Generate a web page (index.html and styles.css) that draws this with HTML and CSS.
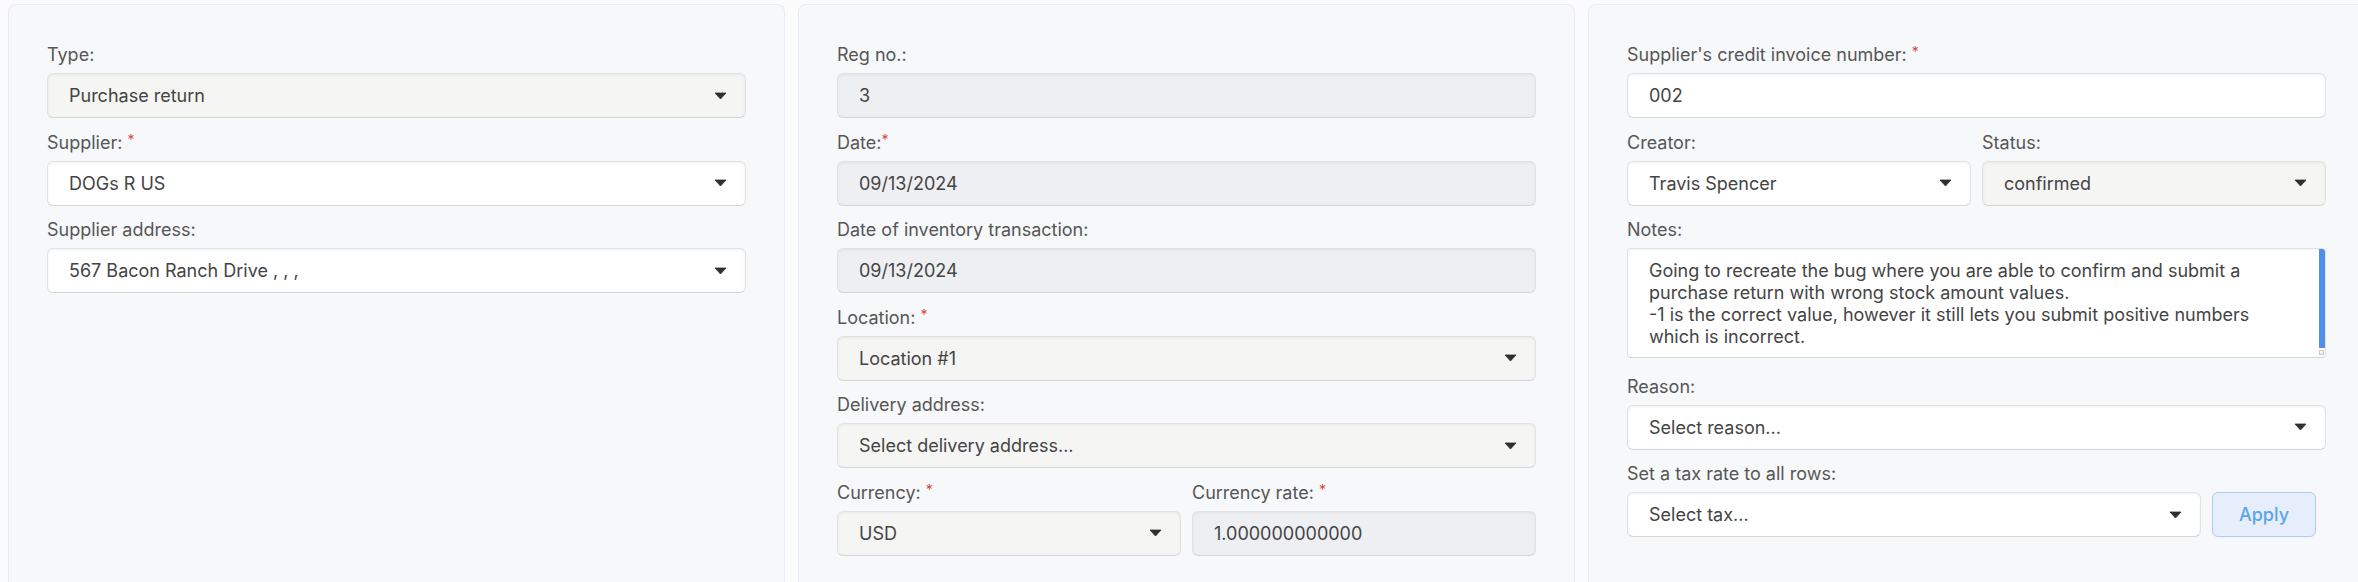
FILE: index.html
```html
<!DOCTYPE html>
<html lang="en">
<head>
<meta charset="utf-8">
<title>Purchase return</title>
<link rel="stylesheet" href="styles.css">
</head>
<body>
<div class="cards">
  <section class="card">
    <div class="field">
      <label class="lbl">Type:</label>
      <div class="ctrl gray"><span>Purchase return</span><svg class="caret" viewBox="0 0 13 8"><path d="M1 1H12L6.5 7Z"/></svg></div>
    </div>
    <div class="field">
      <label class="lbl">Supplier: <span class="req">*</span></label>
      <div class="ctrl"><span>DOGs R US</span><svg class="caret" viewBox="0 0 13 8"><path d="M1 1H12L6.5 7Z"/></svg></div>
    </div>
    <div class="field">
      <label class="lbl">Supplier address:</label>
      <div class="ctrl"><span>567 Bacon Ranch Drive , , ,</span><svg class="caret" viewBox="0 0 13 8"><path d="M1 1H12L6.5 7Z"/></svg></div>
    </div>
  </section>

  <section class="card">
    <div class="field">
      <label class="lbl">Reg no.:</label>
      <div class="ctrl ro"><span>3</span></div>
    </div>
    <div class="field">
      <label class="lbl">Date:<span class="req">*</span></label>
      <div class="ctrl ro"><span>09/13/2024</span></div>
    </div>
    <div class="field">
      <label class="lbl">Date of inventory transaction:</label>
      <div class="ctrl ro"><span>09/13/2024</span></div>
    </div>
    <div class="field">
      <label class="lbl">Location: <span class="req">*</span></label>
      <div class="ctrl gray"><span>Location #1</span><svg class="caret" viewBox="0 0 13 8"><path d="M1 1H12L6.5 7Z"/></svg></div>
    </div>
    <div class="field">
      <label class="lbl">Delivery address:</label>
      <div class="ctrl gray"><span>Select delivery address...</span><svg class="caret" viewBox="0 0 13 8"><path d="M1 1H12L6.5 7Z"/></svg></div>
    </div>
    <div class="row2">
      <div class="field">
        <label class="lbl">Currency: <span class="req">*</span></label>
        <div class="ctrl gray"><span>USD</span><svg class="caret" viewBox="0 0 13 8"><path d="M1 1H12L6.5 7Z"/></svg></div>
      </div>
      <div class="field">
        <label class="lbl">Currency rate: <span class="req">*</span></label>
        <div class="ctrl ro"><span>1.000000000000</span></div>
      </div>
    </div>
  </section>

  <section class="card">
    <div class="field">
      <label class="lbl">Supplier's credit invoice number: <span class="req">*</span></label>
      <div class="ctrl"><span>002</span></div>
    </div>
    <div class="row2">
      <div class="field">
        <label class="lbl">Creator:</label>
        <div class="ctrl"><span>Travis Spencer</span><svg class="caret" viewBox="0 0 13 8"><path d="M1 1H12L6.5 7Z"/></svg></div>
      </div>
      <div class="field">
        <label class="lbl">Status:</label>
        <div class="ctrl gray"><span>confirmed</span><svg class="caret" viewBox="0 0 13 8"><path d="M1 1H12L6.5 7Z"/></svg></div>
      </div>
    </div>
    <div class="field notes-field">
      <label class="lbl">Notes:</label>
      <div class="notes">
        <p class="notes-text">Going to recreate the bug where you are able to confirm and submit a<br>purchase return with wrong stock amount values.<br>-1 is the correct value, however it still lets you submit positive numbers<br>which is incorrect.</p>
        <span class="thumb"></span>
        <span class="grip"></span>
      </div>
    </div>
    <div class="field">
      <label class="lbl">Reason:</label>
      <div class="ctrl"><span>Select reason...</span><svg class="caret" viewBox="0 0 13 8"><path d="M1 1H12L6.5 7Z"/></svg></div>
    </div>
    <div class="field">
      <label class="lbl">Set a tax rate to all rows:</label>
      <div class="tax-row">
        <div class="ctrl"><span>Select tax...</span><svg class="caret" viewBox="0 0 13 8"><path d="M1 1H12L6.5 7Z"/></svg></div>
        <button class="apply" type="button">Apply</button>
      </div>
    </div>
  </section>
</div>
</body>
</html>
```

FILE: styles.css
```css
html, body {
  margin: 0;
  padding: 0;
  overflow: hidden;
  background: #fbfbfc;
}

body {
  font-family: Inter, "Noto Sans", "Liberation Sans", sans-serif;
  font-size: 18px;
  color: #444;
}

.cards {
  box-sizing: border-box;
  display: grid;
  grid-template-columns: repeat(3, 777px);
  column-gap: 13px;
  padding: 4px 0 0 8px;
  height: 582px;
}

.card {
  box-sizing: border-box;
  background: #f7f8fa;
  border: 1px solid #e6ebf4;
  border-bottom: 0;
  border-radius: 8px 8px 0 0;
  padding: 37px 38px 0;
}

.field {
  margin-bottom: 11.6px;
}

.lbl {
  display: block;
  line-height: 25px;
  margin-bottom: 6px;
  color: #565656;
  white-space: nowrap;
}

.req {
  color: #d9473d;
  font-size: 14px;
  vertical-align: top;
  line-height: 20px;
}

.ctrl {
  box-sizing: border-box;
  height: 45px;
  display: flex;
  align-items: center;
  justify-content: space-between;
  padding: 0 18px 0 21px;
  background: #fff;
  border: 1px solid #e1e1e1;
  border-bottom-color: #d6d6d6;
  border-radius: 6px;
  box-shadow: inset 0 1px 3px rgba(0, 0, 0, 0.06);
  color: #444;
  white-space: nowrap;
}

.ctrl.gray {
  background: #f5f5f4;
}

.ctrl.ro {
  background: #eeeff2;
}

.caret {
  width: 13px;
  height: 8px;
  flex: none;
}

.caret path {
  fill: #2f2f2f;
  stroke: #2f2f2f;
  stroke-width: 0.8;
  stroke-linejoin: round;
}

.row2 {
  display: grid;
  grid-template-columns: 1fr 1fr;
  column-gap: 11px;
}

.notes-field {
  margin-bottom: 15.6px;
}

.notes {
  position: relative;
  box-sizing: border-box;
  height: 110px;
  background: #fff;
  border: 1px solid #e1e1e1;
  border-bottom-color: #d6d6d6;
  border-radius: 4px;
  box-shadow: inset 0 1px 3px rgba(0, 0, 0, 0.05);
  padding: 11px 22px 0 21px;
  overflow: hidden;
}

.notes-text {
  margin: 0;
  line-height: 22px;
  white-space: nowrap;
  color: #444;
}

.thumb {
  position: absolute;
  top: 0;
  right: 0;
  width: 6px;
  bottom: 9px;
  background: #4f8ff0;
}

.grip {
  position: absolute;
  right: 1px;
  bottom: 2px;
  width: 3px;
  height: 3px;
  border: 1px solid #c8c8c8;
  background: #f2f2f2;
}

.tax-row {
  display: grid;
  grid-template-columns: 1fr 104px;
  column-gap: 11px;
  padding-right: 10px;
}

.apply {
  box-sizing: border-box;
  height: 45px;
  border: 1px solid #aecbf2;
  background: #e6eefb;
  color: #5aa4ee;
  border-radius: 6px;
  font-family: inherit;
  font-size: 18px;
  font-weight: 500;
  padding: 0;
}
```
